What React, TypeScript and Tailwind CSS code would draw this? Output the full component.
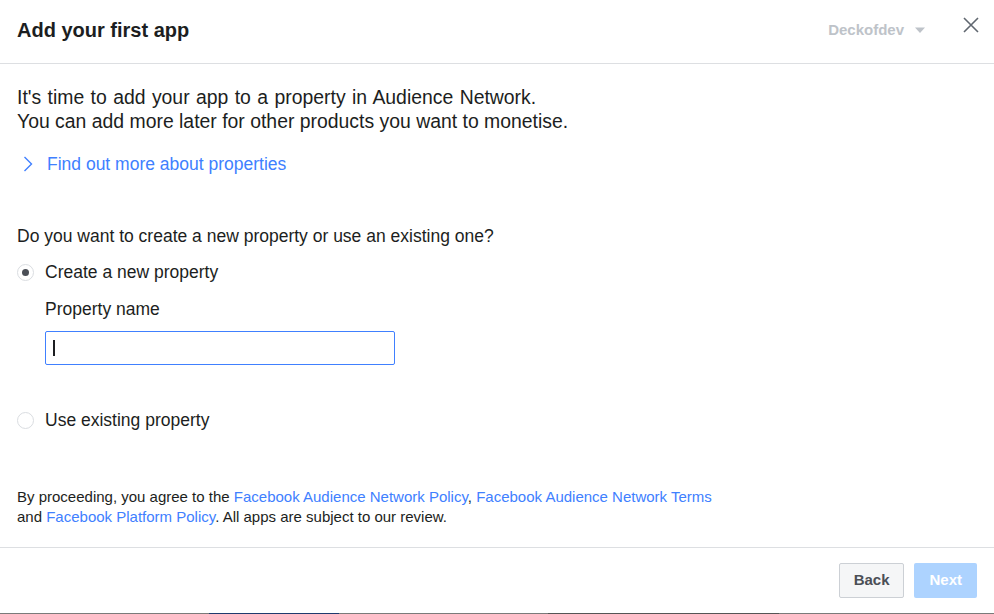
import React from 'react';

const ink = 'text-[#1c1e21]';

function Radio({ checked }: { checked?: boolean }) {
  return (
    <span className="flex h-[17px] w-[17px] items-center justify-center rounded-full border border-[#dadde1] bg-white">
      {checked && <span className="h-[7px] w-[7px] rounded-full bg-[#4b4f56]" />}
    </span>
  );
}

export default function App() {
  return (
    <div className={`flex h-[614px] w-[994px] flex-col bg-white font-['Liberation_Sans',Arial,sans-serif] ${ink}`}>
      <header className="flex h-[64px] shrink-0 items-center border-b border-[#dddfe2] pb-[3px] pl-[17px] pr-[14px]">
        <h1 className="flex-1 text-[20px] font-bold">Add your first app</h1>
        <div className="mr-[36px] flex items-center gap-[10px] text-[15px] font-bold text-[#bec3c9]">
          <span>Deckofdev</span>
          <svg width="12" height="8" viewBox="0 0 12 8">
            <path d="M1 1.5h10L6 7z" fill="#bec3c9" />
          </svg>
        </div>
        <svg width="18" height="18" viewBox="0 0 18 18" className="-mt-[10px]">
          <path d="M2 2l14 14M16 2L2 16" stroke="#606770" strokeWidth="1.6" />
        </svg>
      </header>

      <main className="flex-1 px-[17px] pt-[21px]">
        <p className="text-[19.4px] leading-[24px] [word-spacing:1px]">
          It's time to add your app to a property in Audience Network.
          <br />
          <span className="[word-spacing:0px]">You can add more later for other products you want to monetise.</span>
        </p>
        <a href="#" className="mt-[20px] flex h-[22px] items-center gap-[14px] pl-[6px] text-[17.5px] leading-[22px] text-[#4080ff]">
          <svg width="10" height="16" viewBox="0 0 10 16">
            <path d="M1.5 1l7 7-7 7" stroke="#4080ff" strokeWidth="1.4" fill="none" />
          </svg>
          Find out more about properties
        </a>

        <p className="mt-[50px] text-[17.5px] leading-[22px]">Do you want to create a new property or use an existing one?</p>
        <label className="mt-[14px] flex h-[22px] items-center gap-[11px] text-[17.5px] leading-[22px]">
          <Radio checked />
          Create a new property
        </label>
        <div className="pl-[28px]">
          <div className="mt-[15px] text-[17.5px] leading-[22px]">Property name</div>
          <div className="mt-[11px] flex h-[34px] w-[350px] items-center rounded-[2px] border border-[#4080ff] px-[7px]">
            <span className="h-[16px] w-[2px] bg-[#1c1e21]" />
          </div>
        </div>
        <label className="mt-[44px] flex h-[22px] items-center gap-[11px] text-[17.5px] leading-[22px]">
          <Radio />
          Use existing property
        </label>

        <p className="mt-[56px] text-[15px] leading-[20px]">
          By proceeding, you agree to the <a href="#" className="text-[#4080ff]">Facebook Audience Network Policy</a>,{' '}
          <a href="#" className="text-[#4080ff]">Facebook Audience Network Terms</a>
          <br />
          and <a href="#" className="text-[#4080ff]">Facebook Platform Policy</a>. All apps are subject to our review.
        </p>
      </main>

      <footer className="flex h-[66px] shrink-0 items-center justify-end gap-[10px] border-t border-[#dddfe2] pr-[17px]">
        <button className="h-[35px] rounded-[2px] border border-[#ccd0d5] bg-[#f5f6f7] px-[14px] text-[15px] font-bold text-[#4b4f56]">
          Back
        </button>
        <button className="h-[35px] rounded-[2px] bg-[#add3ff] px-[15px] text-[15px] font-bold text-white">Next</button>
      </footer>

      <div className="flex h-[1px] shrink-0 bg-[#7a7a7a]">
        <span className="ml-[209px] w-[130px] bg-[#1f3a6e]" />
        <span className="ml-[209px] w-[231px] bg-[#555]" />
      </div>
    </div>
  );
}
